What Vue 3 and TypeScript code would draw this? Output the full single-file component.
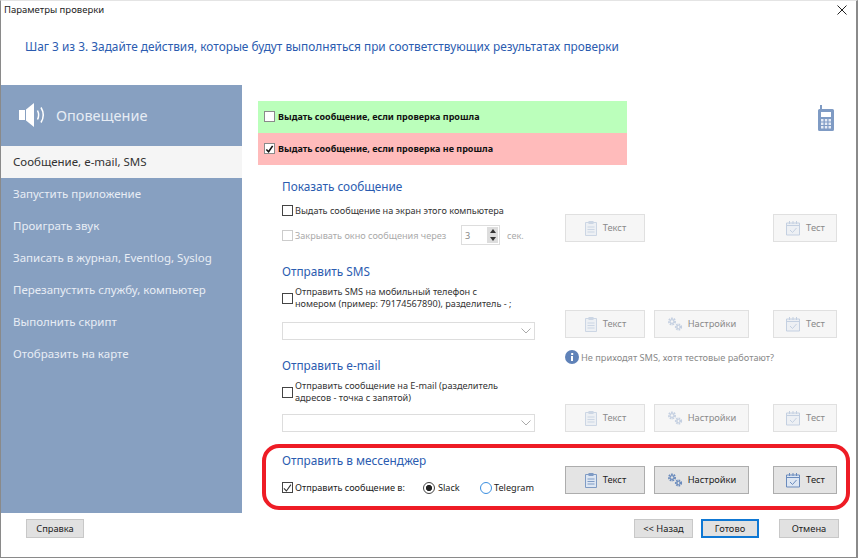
<script setup lang="ts">
const nav: string[] = ['Запустить приложение', 'Проиграть звук', 'Записать в журнал, Eventlog, Syslog', 'Перезапустить службу, компьютер', 'Выполнить скрипт', 'Отобразить на карте']
</script>

<template>
  <div class="win">
    <header class="top">
      <div class="titlebar">
        <span>Параметры проверки</span>
        <svg class="close" width="10" height="10" viewBox="0 0 10 10"><path d="M0.5 0.5l9 9M9.5 0.5l-9 9" stroke="#222" fill="none" /></svg>
      </div>
      <div class="step">Шаг 3 из 3. Задайте действия, которые будут выполняться при соответствующих результатах проверки</div>
    </header>

    <div class="body">
      <aside class="side">
        <div class="side-head">
          <svg width="28" height="26" viewBox="0 0 28 26">
            <path d="M0 8h6v10H0zM7 7.500l8-6.500v24l-8-6.500z" fill="#fff" />
            <path d="M18.500 8.500c1.500 3 1.500 6 0 9M22 5.500c3 5 3 10 0 15" stroke="#fff" stroke-width="1.500" fill="none" />
          </svg>
          <span>Оповещение</span>
        </div>
        <div class="nav-item active">Сообщение, e-mail, SMS</div>
        <div v-for="n in nav" :key="n" class="nav-item">{{ n }}</div>
      </aside>

      <main class="main">
        <div class="banner-row">
          <div class="banners">
            <label class="banner green"><span class="cb"></span>Выдать сообщение, если проверка прошла</label>
            <label class="banner red">
              <span class="cb"><svg width="10" height="10" viewBox="0 0 10 10"><path d="M1.500 5.500l2.500 2.500 4.500-6.500" stroke="#111" stroke-width="1.800" fill="none" /></svg></span>
              Выдать сообщение, если проверка не прошла
            </label>
          </div>
          <svg class="phone" width="16" height="26" viewBox="0 0 16 26">
            <path d="M2 0h2v4h10.500a1.500 1.500 0 0 1 1.500 1.500v19a1.500 1.500 0 0 1-1.500 1.500h-13a1.500 1.500 0 0 1-1.500-1.500v-19a1.500 1.500 0 0 1 1.500-1.500h0.500z" fill="#7f9bc4" />
            <rect x="3" y="7" width="10" height="5" fill="#fff" />
            <path d="M3 14h2.500v2.500H3zM6.800 14h2.500v2.500H6.800zM10.500 14H13v2.500h-2.500zM3 17.500h2.500V20H3zM6.800 17.500h2.500V20H6.800zM10.500 17.500H13V20h-2.500zM3 21h2.500v2.500H3zM6.800 21h2.500v2.500H6.800zM10.500 21H13v2.500h-2.500z" fill="#e6ecf5" />
          </svg>
        </div>

        <section class="sec s1">
          <h3>Показать сообщение</h3>
          <div class="grid">
            <div class="left">
              <label class="row first"><span class="cb dark"></span>Выдать сообщение на экран этого компьютера</label>
              <label class="row second dis">
                <span class="cb light"></span>
                <span class="close-label">Закрывать окно сообщения через</span>
                <span class="spin"><span class="spin-v">3</span><span class="arrows"><i class="up"></i><i class="down"></i></span></span>
                <span class="sec-label">сек.</span>
              </label>
            </div>
            <button class="btn off b-text" disabled><svg class="ic" width="14" height="16" viewBox="0 0 14 16"><path d="M1.500 2.500h11v13h-11z" fill="#dde6f2" stroke="#7f9bc4" /><path d="M4.500 1h5v3h-5z" fill="#7f9bc4" /><path d="M3.500 7h7M3.500 9.500h7M3.500 12h7" fill="none" stroke="#7f9bc4" /></svg>Текст</button>
            <button class="btn off b-test" disabled><svg class="ic" width="16" height="16" viewBox="0 0 16 16"><path d="M1.500 3h13v12h-13z" fill="#dde6f2" stroke="#6a8bbd" /><path d="M1.500 5.500h13M4.500 1v3M8 1v3M11.500 1v3M5 10l2.500 2.500 4-4.500" fill="none" stroke="#6a8bbd" /></svg>Тест</button>
          </div>
        </section>

        <section class="sec s2">
          <h3>Отправить SMS</h3>
          <div class="grid">
            <div class="left">
              <label class="row two-line"><span class="cb dark"></span><span>Отправить SMS на мобильный телефон с<br />номером (пример: 79174567890), разделитель - ;</span></label>
              <div class="select"><svg width="10" height="6" viewBox="0 0 10 6"><path d="M0.500 0.500l4.500 4.500 4.500-4.500" fill="none" stroke="#aaa" /></svg></div>
            </div>
            <button class="btn off b-text low" disabled><svg class="ic" width="14" height="16" viewBox="0 0 14 16"><path d="M1.500 2.500h11v13h-11z" fill="#dde6f2" stroke="#7f9bc4" /><path d="M4.500 1h5v3h-5z" fill="#7f9bc4" /><path d="M3.500 7h7M3.500 9.500h7M3.500 12h7" fill="none" stroke="#7f9bc4" /></svg>Текст</button>
            <button class="btn off b-set low" disabled><svg class="ic" width="16" height="14" viewBox="0 0 16 14"><circle cx="5" cy="4.500" r="2.800" fill="none" stroke="#6a8bbd" stroke-width="2.400" stroke-dasharray="1.600 0.800" /><circle cx="5" cy="4.500" r="1.800" fill="none" stroke="#6a8bbd" /><circle cx="11.500" cy="10" r="2.500" fill="none" stroke="#6a8bbd" stroke-width="2.200" stroke-dasharray="1.500 0.800" /><circle cx="11.500" cy="10" r="1.600" fill="none" stroke="#6a8bbd" /></svg>Настройки</button>
            <button class="btn off b-test low" disabled><svg class="ic" width="16" height="16" viewBox="0 0 16 16"><path d="M1.500 3h13v12h-13z" fill="#dde6f2" stroke="#6a8bbd" /><path d="M1.500 5.500h13M4.500 1v3M8 1v3M11.500 1v3M5 10l2.500 2.500 4-4.500" fill="none" stroke="#6a8bbd" /></svg>Тест</button>
            <div class="note">
              <svg width="14" height="14" viewBox="0 0 14 14"><circle cx="7" cy="7" r="7" fill="#5f82b8" /><path d="M6.200 3h2v2h-2zM6 6h2v5H6z" fill="#fff" /></svg>
              <span>Не приходят SMS, хотя тестовые работают?</span>
            </div>
          </div>
        </section>

        <section class="sec s3">
          <h3>Отправить e-mail</h3>
          <div class="grid">
            <div class="left">
              <label class="row two-line"><span class="cb dark"></span><span>Отправить сообщение на E-mail (разделитель<br />адресов - точка с запятой)</span></label>
              <div class="select tight"><svg width="10" height="6" viewBox="0 0 10 6"><path d="M0.500 0.500l4.500 4.500 4.500-4.500" fill="none" stroke="#aaa" /></svg></div>
            </div>
            <button class="btn off b-text low" disabled><svg class="ic" width="14" height="16" viewBox="0 0 14 16"><path d="M1.500 2.500h11v13h-11z" fill="#dde6f2" stroke="#7f9bc4" /><path d="M4.500 1h5v3h-5z" fill="#7f9bc4" /><path d="M3.500 7h7M3.500 9.500h7M3.500 12h7" fill="none" stroke="#7f9bc4" /></svg>Текст</button>
            <button class="btn off b-set low" disabled><svg class="ic" width="16" height="14" viewBox="0 0 16 14"><circle cx="5" cy="4.500" r="2.800" fill="none" stroke="#6a8bbd" stroke-width="2.400" stroke-dasharray="1.600 0.800" /><circle cx="5" cy="4.500" r="1.800" fill="none" stroke="#6a8bbd" /><circle cx="11.500" cy="10" r="2.500" fill="none" stroke="#6a8bbd" stroke-width="2.200" stroke-dasharray="1.500 0.800" /><circle cx="11.500" cy="10" r="1.600" fill="none" stroke="#6a8bbd" /></svg>Настройки</button>
            <button class="btn off b-test low" disabled><svg class="ic" width="16" height="16" viewBox="0 0 16 16"><path d="M1.500 3h13v12h-13z" fill="#dde6f2" stroke="#6a8bbd" /><path d="M1.500 5.500h13M4.500 1v3M8 1v3M11.500 1v3M5 10l2.500 2.500 4-4.500" fill="none" stroke="#6a8bbd" /></svg>Тест</button>
          </div>
        </section>

        <section class="sec s4">
          <h3>Отправить в мессенджер</h3>
          <div class="grid">
            <div class="left msg">
              <span class="cb dark"><svg width="10" height="10" viewBox="0 0 10 10"><path d="M1 5.500l2.800 2.800 5-7" stroke="#333" stroke-width="1.200" fill="none" /></svg></span>
              <span class="msg-label">Отправить сообщение в:</span>
              <span class="radio on"></span><span class="r1">Slack</span>
              <span class="radio blue"></span><span>Telegram</span>
            </div>
            <button class="btn b-text"><svg class="ic" width="14" height="16" viewBox="0 0 14 16"><path d="M1.500 2.500h11v13h-11z" fill="#dde6f2" stroke="#7f9bc4" /><path d="M4.500 1h5v3h-5z" fill="#7f9bc4" /><path d="M3.500 7h7M3.500 9.500h7M3.500 12h7" fill="none" stroke="#7f9bc4" /></svg>Текст</button>
            <button class="btn b-set"><svg class="ic" width="16" height="14" viewBox="0 0 16 14"><circle cx="5" cy="4.500" r="2.800" fill="none" stroke="#6a8bbd" stroke-width="2.400" stroke-dasharray="1.600 0.800" /><circle cx="5" cy="4.500" r="1.800" fill="none" stroke="#6a8bbd" /><circle cx="11.500" cy="10" r="2.500" fill="none" stroke="#6a8bbd" stroke-width="2.200" stroke-dasharray="1.500 0.800" /><circle cx="11.500" cy="10" r="1.600" fill="none" stroke="#6a8bbd" /></svg>Настройки</button>
            <button class="btn b-test"><svg class="ic" width="16" height="16" viewBox="0 0 16 16"><path d="M1.500 3h13v12h-13z" fill="#dde6f2" stroke="#6a8bbd" /><path d="M1.500 5.500h13M4.500 1v3M8 1v3M11.500 1v3M5 10l2.500 2.500 4-4.500" fill="none" stroke="#6a8bbd" /></svg>Тест</button>
          </div>
        </section>
        <div class="ring"></div>
      </main>
    </div>

    <footer class="foot">
      <button class="fbtn help">Справка</button>
      <span class="spacer"></span>
      <button class="fbtn back">&lt;&lt; Назад</button>
      <button class="fbtn done">Готово</button>
      <button class="fbtn cancel">Отмена</button>
    </footer>
  </div>
</template>

<style scoped>
.win { box-sizing: border-box; width: 858px; height: 558px; display: flex; flex-direction: column; background: #fff; border: 1px solid #8a8a8a; border-top-color: #e4e4e4; border-right-width: 2px; font-family: "Noto Sans", "Open Sans", sans-serif; font-size: 10px; color: #333; overflow: hidden; }
.top { height: 84px; flex: none; }
.titlebar { height: 17px; display: flex; align-items: center; justify-content: space-between; padding: 0 9px 0 3px; font-size: 9.500px; color: #222; }
.step { margin: 19px 0 0 24px; font-size: 11.850px; line-height: 18px; color: #2b5cb0; white-space: nowrap; }
.body { display: flex; height: 428px; flex: none; }
.side { width: 241px; flex: none; background: #87a0c1; }
.side-head { height: 61px; display: flex; align-items: center; gap: 9px; padding: 0 0 1px 18px; box-sizing: border-box; font-size: 14.500px; color: #e6ecf4; }
.nav-item { height: 32px; box-sizing: border-box; display: flex; align-items: center; padding: 0 0 1px 12px; font-size: 11.500px; color: #e8edf5; }
.nav-item.active { background: #f5f5f5; color: #333; }
.main { position: relative; flex: 1; padding: 16px 0 0 16px; min-width: 0; }
.banner-row { display: flex; justify-content: space-between; align-items: flex-start; padding-right: 22px; }
.banners { width: 369px; }
.phone { margin-top: 4px; }
.banner { height: 32px; box-sizing: border-box; padding-bottom: 1px; display: flex; align-items: center; gap: 3px; padding-left: 6px; font-weight: 700; color: #111; font-size: 9px; }
.green { background: #bbffbb; }
.red { background: #ffbbbb; }
.cb { box-sizing: border-box; width: 11px; height: 11px; flex: none; background: #fff; border: 1px solid #8a8a8a; display: inline-flex; align-items: center; justify-content: center; }
.cb.dark { border-color: #444; }
.cb.light { border-color: #ccc; }
.sec { margin-left: 24px; }
.sec h3 { margin: 0; height: 18px; line-height: 16px; font-size: 11.800px; font-weight: 400; color: #2b5cb0; white-space: nowrap; }
.s1 { margin-top: 13px; height: 85px; }
.s2 { height: 94px; }
.s3 { height: 95px; }
.grid { display: grid; grid-template-columns: 283px 89px 119px 64px; align-items: start; }
.s4 .grid { margin-top: -4px; }
.b-text { grid-column: 2; grid-row: 1; }
.b-set { grid-column: 3; grid-row: 1; }
.b-test { grid-column: 4; grid-row: 1; }
.left { grid-column: 1; grid-row: 1; width: 253px; }
.s1 .btn { margin-top: 18px; }
.low { margin-top: 29px; }
.row { display: flex; align-items: center; gap: 2px; font-size: 9.150px; color: #333; white-space: nowrap; }
.first { height: 14px; margin-top: 7px; }
.second { height: 20px; margin-top: 8px; }
.dis { color: #aaa; }
.close-label { width: 164px; }
.spin { box-sizing: border-box; width: 39px; height: 20px; border: 1px solid #ddd; display: flex; align-items: center; justify-content: space-between; padding: 0 1px 0 3px; color: #888; }
.arrows { width: 11px; height: 16px; background: #ddd; display: flex; flex-direction: column; align-items: center; justify-content: space-around; }
.up { width: 0; height: 0; border: 3px solid transparent; border-top: 0; border-bottom: 4px solid #333; }
.down { width: 0; height: 0; border: 3px solid transparent; border-bottom: 0; border-top: 4px solid #333; }
.sec-label { margin-left: 5px; }
.two-line { height: 26px; margin-top: 4px; line-height: 12.500px; align-items: center; }
.select { box-sizing: border-box; margin-top: 11px; width: 253px; height: 18px; border: 1px solid #ddd; display: flex; align-items: center; justify-content: flex-end; padding-right: 3px; }
.select.tight { margin-top: 9px; }
.note { grid-column: 2 / 5; grid-row: 2; display: flex; align-items: center; gap: 2px; margin-top: 10px; height: 14px; font-size: 9.200px; color: #8a8a8a; white-space: nowrap; }
.btn { box-sizing: border-box; height: 28px; display: flex; align-items: center; justify-content: center; gap: 5px; background: #e4e4e4; border: 1px solid #adadad; font-family: inherit; font-size: 9.300px; color: #222; padding: 0 0 1px; }
.b-text { width: 80px; }
.b-set { width: 95px; }
.b-test { width: 64px; }
.btn.off { background: #f6f6f6; border-color: #e0e0e0; color: #8a8a8a; }
.btn.off .ic { opacity: 0.35; }
.msg { display: flex; align-items: center; gap: 2px; margin-top: 15px; font-size: 9.150px; white-space: nowrap; color: #222; }
.msg-label { width: 126px; }
.radio { box-sizing: border-box; width: 12px; height: 12px; border-radius: 50%; border: 1px solid #444; background: #fff; flex: none; }
.radio.on { background: radial-gradient(circle, #222 0 2.800px, #fff 3.300px); }
.radio.blue { border-color: #3b8fe0; }
.r1 { width: 40px; margin-left: 1px; }
.ring { position: absolute; left: 20px; top: 359px; width: 588px; height: 66px; box-sizing: border-box; border: 4px solid #ee1c25; border-radius: 17px; pointer-events: none; }
.foot { flex: 1; display: flex; align-items: flex-start; padding: 6px 17px 0 25px; }
.spacer { flex: 1; }
.fbtn { box-sizing: border-box; height: 19px; background: #e1e1e1; border: 1px solid #c8c8c8; font-family: inherit; font-size: 9.300px; color: #222; padding: 0 0 1px; }
.help { width: 58px; }
.back { width: 59px; }
.done { width: 58px; margin-left: 8px; border: 2px solid #0f78d4; }
.cancel { width: 60px; margin-left: 20px; }
</style>
